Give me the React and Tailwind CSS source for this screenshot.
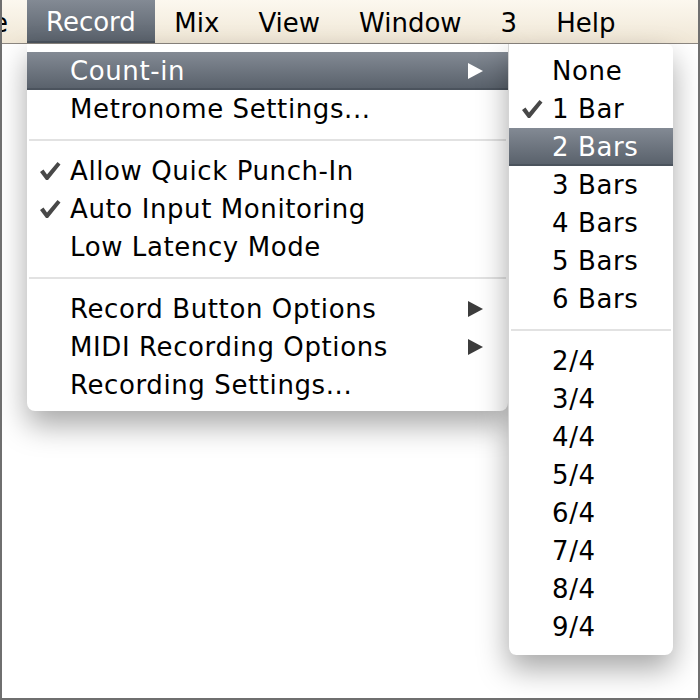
const font = { fontFamily: '"DejaVu Sans", "Lucida Grande", sans-serif' };

const Check = () => (
  <svg width="22" height="20" viewBox="0 0 22 20" className="shrink-0">
    <path d="M1 11 L4.5 8.5 L8 13.5 L18.5 1 L21.5 3.5 L9 19 L7 19 Z" fill="#484848" />
  </svg>
);

const Arrow = ({ light }) => (
  <svg width="17" height="18" viewBox="0 0 17 18">
    <path d="M1 1 L16 9 L1 17 Z" fill={light ? '#ffffff' : '#3c3c3c'} />
  </svg>
);

const Row = ({ label, checked, arrow, active }) => (
  <div
    className={`flex items-center h-[38px] ${
      active
        ? 'bg-gradient-to-b from-[#838a94] to-[#5a626c] border-b-2 border-[#4b535d] text-white pt-[2px]'
        : 'text-black'
    }`}
  >
    <div className="w-[43px] flex justify-end pr-[9px]">{checked && <Check />}</div>
    <span className="flex-1 whitespace-nowrap leading-none tracking-[0.6px]">{label}</span>
    {arrow && (
      <div className="pr-[24px]">
        <Arrow light={active} />
      </div>
    )}
  </div>
);

const Sep = () => (
  <div className="h-[24px] flex items-center px-[2px]">
    <div className="h-[2px] w-full bg-[#e2e2e2]" />
  </div>
);

export default function App() {
  const menus = ['Mix', 'View', 'Window', '3', 'Help'];
  const bars = ['3 Bars', '4 Bars', '5 Bars', '6 Bars'];
  const meters = ['2/4', '3/4', '4/4', '5/4', '6/4', '7/4', '8/4', '9/4'];

  return (
    <div className="relative w-[700px] h-[700px] bg-white border-l-2 border-r-2 border-b-2 border-[#6f6f6f] overflow-hidden text-[26px]" style={font}>
      {/* menu bar */}
      <div className="flex h-[44px] -ml-[2px] bg-gradient-to-b from-[#fcf8ef] to-[#f0e7d6] border-b border-[#8c8781]">
        <div className="flex items-center pt-[3px] pr-[19px] -ml-[8px]">e</div>
        <div className="flex items-center pt-[3px] px-[19px] text-white bg-gradient-to-b from-[#838a94] to-[#5b636d] border-b-2 border-[#4b535d]">Record</div>
        {menus.map((m) => (
          <div key={m} className="flex items-center pt-[3px] px-[19.5px] text-black">{m}</div>
        ))}
      </div>

      {/* Record menu */}
      <div className="absolute left-[25px] top-[44px] w-[481px] bg-white pt-[8px] pb-[7px] rounded-b-[8px] shadow-[0_14px_30px_rgba(0,0,0,0.35)]">
        <Row label="Count-in" arrow active />
        <Row label="Metronome Settings..." />
        <Sep />
        <Row label="Allow Quick Punch-In" checked />
        <Row label="Auto Input Monitoring" checked />
        <Row label="Low Latency Mode" />
        <Sep />
        <Row label="Record Button Options" arrow />
        <Row label="MIDI Recording Options" arrow />
        <Row label="Recording Settings..." />
      </div>

      {/* Count-in submenu */}
      <div className="absolute left-[506px] top-[44px] w-[165px] bg-white pt-[8px] pb-[9px] rounded-tr-[6px] rounded-b-[8px] border-l border-[#d4d4d4] shadow-[0_14px_30px_rgba(0,0,0,0.35)]">
        <Row label="None" />
        <Row label="1 Bar" checked />
        <Row label="2 Bars" active />
        {bars.map((b) => (
          <Row key={b} label={b} />
        ))}
        <Sep />
        {meters.map((m) => (
          <Row key={m} label={m} />
        ))}
      </div>
    </div>
  );
}
